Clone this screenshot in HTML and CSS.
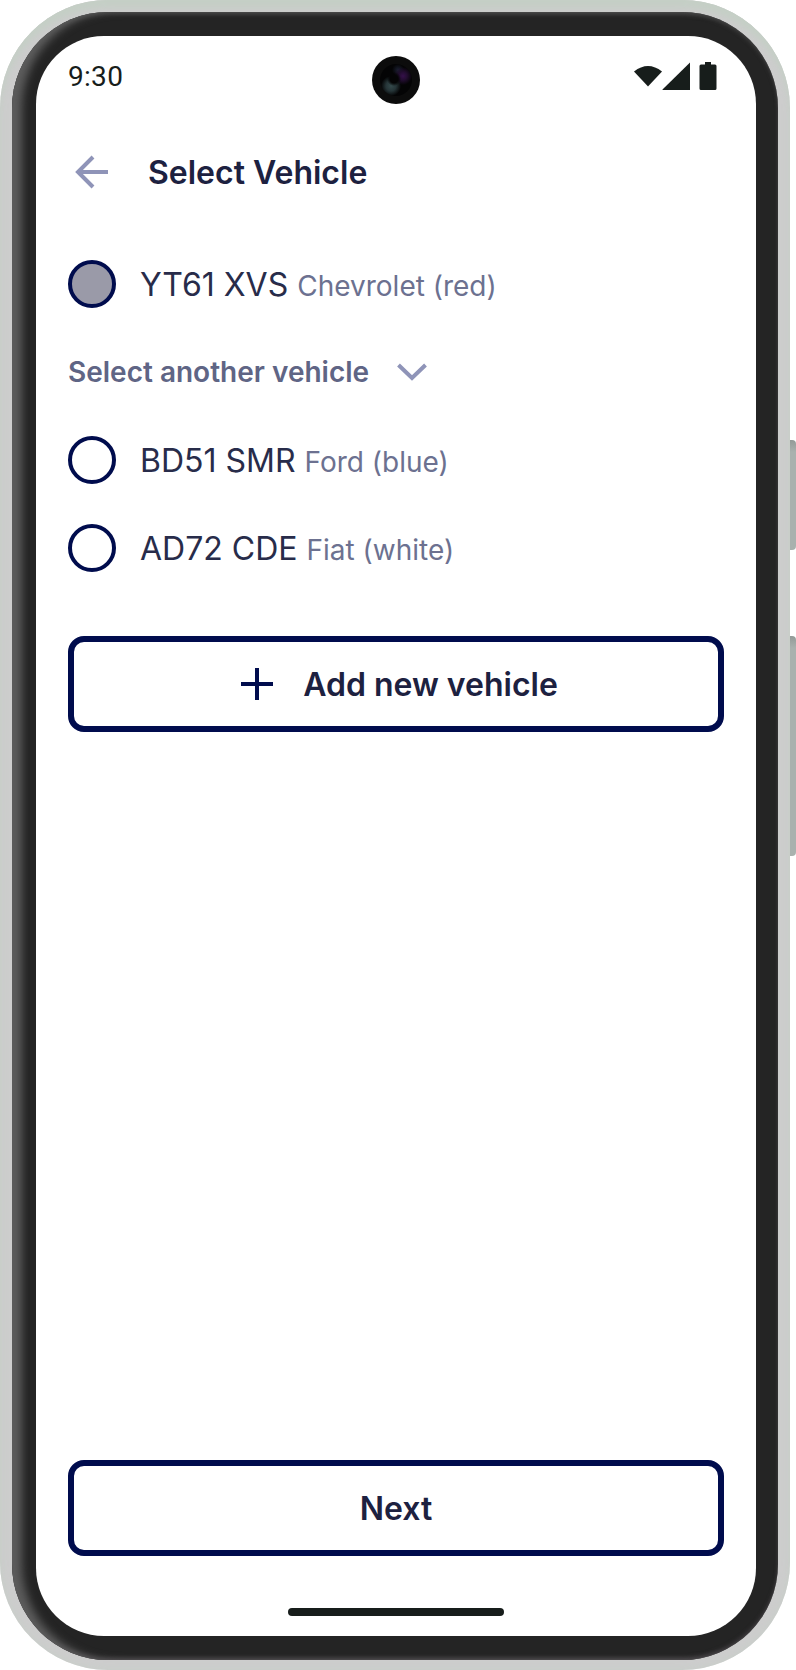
FILE: index.html
```html
<!DOCTYPE html>
<html lang="en">
<head>
<meta charset="utf-8">
<title>Select Vehicle</title>
<link rel="stylesheet" href="styles.css">
</head>
<body>
<div class="device">
  <div class="phone">
    <div class="bezel">
      <main class="screen">
        <div class="status-bar">
          <span class="time">9:30</span>
          <svg class="status-icons" width="84" height="32" viewBox="0 0 84 32" fill="#171d1b">
            <path d="M0 9.500Q14 -1.500 28 9.500L14 24.500Z"/>
            <path d="M28.500 28V27.500L56 0.500V28Z"/>
            <path d="M67 2.500h4V0h6v2.500h4q1.500 0 1.500 1.500v22.500q0 1.500-1.500 1.500H67q-1.500 0-1.500-1.500V4q0-1.500 1.500-1.500Z"/>
          </svg>
          <span class="camera"><span class="lens"></span></span>
        </div>
        <header class="header">
          <svg class="back" width="48" height="48" viewBox="0 0 48 48" fill="none" stroke="#8f94b8" stroke-width="4">
            <path d="M40 24H10M25 9L10 24L25 39"/>
          </svg>
          <h1 class="title">Select Vehicle</h1>
        </header>
        <section class="vehicles">
          <div class="vehicle"><span class="radio radio-on"></span><span class="label"><span class="plate">YT61 XVS</span> <span class="model">Chevrolet (red)</span></span></div>
          <div class="toggle"><span class="toggle-text">Select another vehicle</span>
            <svg width="30" height="18" viewBox="0 0 30 18" fill="none" stroke="#8f94b8" stroke-width="4"><path d="M1.500 2L15 15L28.500 2"/></svg>
          </div>
          <div class="vehicle"><span class="radio"></span><span class="label"><span class="plate">BD51 SMR</span> <span class="model">Ford (blue)</span></span></div>
          <div class="vehicle"><span class="radio"></span><span class="label"><span class="plate">AD72 CDE</span> <span class="model">Fiat (white)</span></span></div>
        </section>
        <button class="button add">
          <svg width="32" height="32" viewBox="0 0 32 32" fill="none" stroke="#000c4d" stroke-width="4"><path d="M16 0V32M0 16H32"/></svg>
          <span>Add new vehicle</span>
        </button>
        <button class="button next">Next</button>
        <div class="home-bar"></div>
      </main>
    </div>
  </div>
  <div class="side-keys">
    <span class="key key-power"></span>
    <span class="key key-volume"></span>
  </div>
</div>
</body>
</html>
```
FILE: styles.css
```css
* {
  box-sizing: border-box;
}

body {
  margin: 0;
  background: #fff;
  font-family: Inter, "Liberation Sans", sans-serif;
  color: #1d2140;
}

.device {
  display: flex;
  width: 796px;
  height: 1670px;
}

.phone {
  width: 790px;
  height: 1670px;
  padding: 12px 12px 10px;
  border-radius: 108px;
  background: #cdcdcd;
  box-shadow: inset 0 10px 6px -2px #c5cfc6, inset 0 0 8px #c7cfc8;
}

.bezel {
  height: 1648px;
  padding: 24px 22px 24px 24px;
  border-radius: 96px;
  background: #242424;
  box-shadow: inset 12px 0 8px -2px #5c5c5c, inset 0 3px 4px -1px #454545, inset 0 -3px 4px -1px #484448;
}

.screen {
  display: flex;
  flex-direction: column;
  height: 1600px;
  padding: 0 32px;
  border-radius: 68px;
  background: #fff;
}

.status-bar {
  position: relative;
  display: flex;
  justify-content: space-between;
  height: 112px;
  padding: 24px 6px 0 0;
}

.time {
  font: 400 28px/34px Roboto, sans-serif;
  letter-spacing: 0.3px;
  color: #171d1b;
}

.status-icons {
  margin-top: 2px;
}

.camera {
  position: absolute;
  top: 20px;
  left: 304px;
  width: 48px;
  height: 48px;
  padding: 8px;
  border-radius: 50%;
  background: #0c0c0c;
}

.lens {
  display: block;
  width: 32px;
  height: 32px;
  border-radius: 50%;
  background:
    radial-gradient(circle at 14px 15px, #040405 0, #040405 4px, transparent 7px),
    radial-gradient(circle at 11px 22px, #34494b 0, #263538 5px, transparent 10px),
    radial-gradient(circle at 23px 12px, #35104a 0, #230d31 4px, transparent 9px),
    radial-gradient(circle at 18px 6px, #1b2032 0, transparent 6px),
    #040405;
}

.header {
  display: flex;
  align-items: center;
  gap: 32px;
  height: 48px;
}

.title {
  margin: 0;
  padding-top: 2px;
  font-size: 32px;
  font-weight: 600;
  line-height: 48px;
}

.vehicles {
  display: flex;
  flex-direction: column;
  gap: 40px;
  margin-top: 64px;
}

.vehicle {
  display: flex;
  align-items: center;
  gap: 24px;
  height: 48px;
}

.radio {
  width: 48px;
  height: 48px;
  border: 4px solid #000c4d;
  border-radius: 50%;
}

.radio-on {
  background: #9a9aa8;
}

.label {
  padding-top: 2px;
  font-size: 32px;
  font-weight: 400;
  line-height: 48px;
  white-space: nowrap;
}

.plate {
  color: #282c4a;
}

.model {
  font-size: 28px;
  color: #6c7190;
}

.toggle {
  display: flex;
  align-items: center;
  gap: 28px;
  height: 48px;
  color: #5f6585;
}

.toggle-text {
  font-size: 28px;
  font-weight: 600;
}

.button {
  display: flex;
  align-items: center;
  justify-content: center;
  gap: 30px;
  height: 96px;
  flex: none;
  padding: 0;
  border: 6px solid #000c4d;
  border-radius: 16px;
  background: #fff;
  color: #1d2140;
  font: 600 32px Inter, sans-serif;
}

.add {
  margin-top: 64px;
  padding-left: 7px;
}

.next {
  margin-top: auto;
}

.home-bar {
  align-self: center;
  width: 216px;
  height: 8px;
  margin: 52px 0 20px;
  border-radius: 4px;
  background: #171d1b;
}

.side-keys {
  display: flex;
  flex-direction: column;
  gap: 86px;
  width: 6px;
  padding-top: 440px;
}

.key {
  border-radius: 0 4px 4px 0;
  background: linear-gradient(#929a97, #a9b1ae 12px, #a9b1ae);
}

.key-power {
  height: 110px;
}

.key-volume {
  height: 220px;
}
```
